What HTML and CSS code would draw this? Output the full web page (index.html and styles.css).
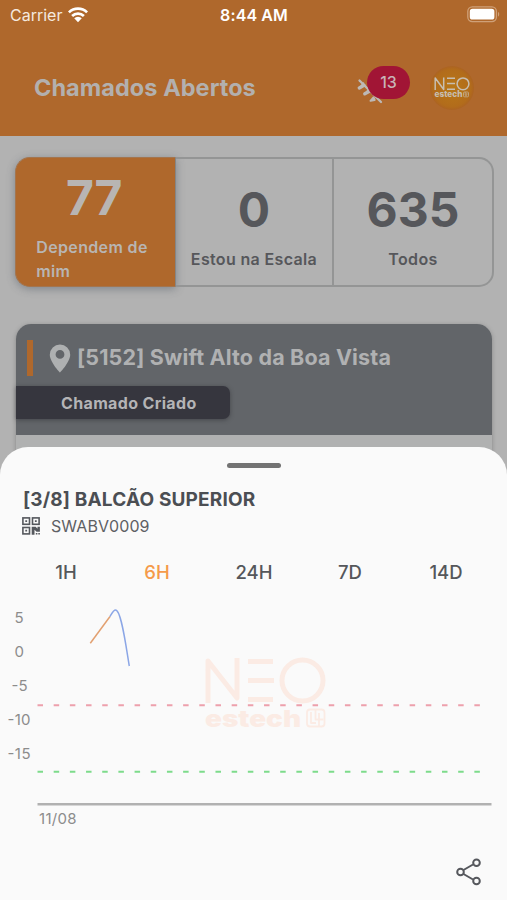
FILE: index.html
```html
<!DOCTYPE html>
<html lang="pt-BR">
<head>
<meta charset="utf-8">
<title>Chamados Abertos</title>
<link rel="stylesheet" href="styles.css">
</head>
<body>
<div class="screen">
  <header class="header">
    <div class="status">
      <div class="carrier"><span class="carrier-name">Carrier</span>
        <svg class="wifi" width="20" height="16" viewBox="0 0 20 16"><g fill="none" stroke="#fff" stroke-width="2.7"><path d="M.9 5.4a13 13 0 0 1 18.2 0"/><path d="M4.1 9a8.5 8.5 0 0 1 11.8 0"/></g><path d="M6.2 11.3a5.5 5.5 0 0 1 7.6 0L10 15.2z" fill="#fff"/></svg>
      </div>
      <span class="clock">8:44 AM</span>
      <svg class="battery" width="33" height="17" viewBox="0 0 33 17"><rect x=".8" y=".8" width="28.6" height="14.8" rx="4.5" fill="none" stroke="#cfa078" stroke-width="1.3"/><rect x="2.8" y="2.8" width="24.6" height="10.8" rx="2.7" fill="#fff"/><path d="M31 6c1.6.6 1.6 3.9 0 4.5z" fill="#cfa078"/></svg>
    </div>
    <div class="title-row">
      <h1 class="title">Chamados Abertos</h1>
      <div class="alerts">
        <svg class="alert-icon" width="28" height="28" viewBox="0 0 28 28"><g fill="none" stroke="#bdb9b6" stroke-linecap="round"><path d="M3.500 2.500L25 24" stroke-width="2.300"/><path d="M3.300 10l4.700-2.700M8.800 15.800l5-2.800" stroke-width="3.400"/><path d="M4 9.500L7.500 5M10 15l3-4.500" stroke-width="1.500"/><path d="M14.500 22.800l4.200-.8-1.200-2.500z" fill="#bdb9b6" stroke-width="2" stroke-linejoin="round"/></g></svg>
        <span class="badge">13</span>
      </div>
      <svg class="avatar" width="44" height="46" viewBox="0 0 44 46"><defs><radialGradient id="av"><stop offset="0" stop-color="#b87818"/><stop offset=".85" stop-color="#b26c1b"/><stop offset="1" stop-color="#ac6322"/></radialGradient></defs><circle cx="22" cy="23" r="22" fill="url(#av)"/><g fill="none" stroke="#c7beb1" stroke-width="1.5"><path stroke-linejoin="round" d="M5.200 25v-12l8.500 11.500v-12M17 13.200h8M17 18.500h8M17 24.300h8"/><circle cx="33" cy="18.800" r="5.900"/></g><g fill="none" stroke="#c7beb1" stroke-width=".9" opacity=".75"><rect x="33.500" y="27" width="5" height="4.800" rx="1"/><path d="M35.200 27v3.300h1.600V28"/></g><text class="avatar-sub" x="4.500" y="32" textLength="28" lengthAdjust="spacingAndGlyphs">estech</text></svg>
    </div>
  </header>

  <main class="content">
    <section class="stats">
      <div class="stat active"><span class="num">77</span><span class="label">Dependem de<br>mim</span></div>
      <div class="stat"><span class="num">0</span><span class="label">Estou na Escala</span></div>
      <div class="stat"><span class="num">635</span><span class="label">Todos</span></div>
    </section>
    <section class="ticket">
      <div class="ticket-head">
        <div class="ticket-title">
          <span class="bar"></span>
          <svg class="pin" width="22" height="29" viewBox="0 0 22 29"><path fill-rule="evenodd" fill="#aeb0b1" d="M11 .5A10.200 10.200 0 0 0 .8 10.700C.8 18 11 28.500 11 28.500S21.200 18 21.200 10.700A10.200 10.200 0 0 0 11 .5zM11 6a4.400 4.400 0 1 1 0 8.800A4.400 4.400 0 0 1 11 6z"/></svg>
          <h2 class="place">[5152] Swift Alto da Boa Vista</h2>
        </div>
        <div class="state">Chamado Criado</div>
      </div>
    </section>
  </main>

  <section class="sheet">
    <div class="handle"></div>
    <h3 class="device">[3/8] BALCÃO SUPERIOR</h3>
    <div class="code-row">
      <svg width="18" height="18" viewBox="0 0 18 18"><g fill="none" stroke="#55585d" stroke-width="1.600"><rect x=".9" y=".9" width="6.600" height="6.400"/><rect x="10.500" y=".9" width="6.600" height="6.400"/><rect x=".9" y="10.500" width="6.600" height="6.400"/></g><path fill="#55585d" d="M3.300 3.200h1.800v1.800H3.300zM12.900 3.200h1.800v1.800h-1.800zM3.300 12.800h1.800v1.800H3.300zM9.700 9.700h4l1.800 2V9.700h2.400v5h-3.400l-2-2v5H9.700zM13.800 16h1.600v1.600h-1.600zM16.300 16h1.600v1.600h-1.600z"/></svg>
      <span class="code">SWABV0009</span>
    </div>
    <nav class="tabs"><span>1H</span><span class="selected">6H</span><span>24H</span><span>7D</span><span>14D</span></nav>
    <svg class="chart" width="507" height="240" viewBox="0 595 507 240">
      <g class="watermark">
        <path d="M208 703v-42l29 37v-40M248 661.500h25M248 680.500h26M248 699.500h25"/>
        <circle cx="302.500" cy="680.500" r="20.500"/>
        <rect x="307" y="709.500" width="17.500" height="17" rx="3" class="mark"/>
        <path class="mark" d="M311 712v11h5M315.500 709.500v10h8M319 713v13"/>
        <text x="205" y="727" textLength="96" lengthAdjust="spacingAndGlyphs">estech</text>
      </g>
      <g class="axis">
        <text x="14.500" y="622.500">5</text><text x="14.500" y="656.500">0</text><text x="11.500" y="690.500">-5</text><text x="7.500" y="724.500" textLength="23">-10</text><text x="7.500" y="758.500" textLength="23">-15</text><text x="39" y="824" textLength="37.500">11/08</text>
      </g>
      <path d="M37.500 705.200H481" stroke="#eda0ac" class="limit"/>
      <path d="M37.500 771.700H481" stroke="#7ddb8b" class="limit"/>
      <path d="M37.500 804.200H491.500" stroke="#b1b1b1" stroke-width="2.600"/>
      <path d="M90.300 643.300L110 616.500" class="line" stroke="#e2a070"/>
      <path d="M110 616.500C112 613.300 113.500 610 115.500 610C121.500 610 126.500 650 129.300 666" class="line" stroke="#8ba6e6"/>
    </svg>
    <svg class="share" width="26" height="28" viewBox="0 0 26 28"><g fill="none" stroke="#55575c" stroke-width="2"><path d="M7.500 12l9.500-5.500M7.500 16l9.500 5.500"/><circle cx="4.500" cy="14" r="3.300"/><circle cx="20.500" cy="4.800" r="3.300"/><circle cx="20.500" cy="23" r="3.300"/></g></svg>
  </section>
</div>
</body>
</html>
```
FILE: styles.css
```css
* { box-sizing: border-box; }
body { margin: 0; font-family: Inter, "Liberation Sans", sans-serif; background: #b2b2b2; }
h1, h2, h3 { margin: 0; }
.screen { position: relative; width: 507px; height: 900px; overflow: hidden; background: #b2b2b2; }

.header { height: 136px; background: #af682c; }
.status { display: grid; grid-template-columns: 1fr auto 1fr; height: 30px; padding: 0 7px 0 10px; align-items: center; color: #fff; }
.carrier { display: flex; align-items: center; gap: 6px; }
.carrier-name { font-size: 16px; letter-spacing: 0; color: #f5e9df; }
.clock { font-size: 16px; font-weight: 600; letter-spacing: .1px; margin-right: 2px; }
.battery { justify-self: end; margin-top: -2px; }
.title-row { display: flex; align-items: center; height: 106px; padding: 10px 33px 0 34px; }
.title { flex: 1; font-size: 23.500px; line-height: 30px; font-weight: 650; letter-spacing: .05px; color: #b3b0ae; }
.alerts { display: flex; width: 54px; height: 44px; margin-right: 19px; position: relative; }
.alert-icon { margin: 12px 0 0 -1px; }
.badge { position: absolute; left: 10px; top: 0; width: 43px; height: 33px; border-radius: 17px; background: #a11535; color: #c8b3b7; font-size: 16px; line-height: 33px; text-align: center; font-weight: 500; }
.avatar-sub { font-size: 8.500px; font-weight: 800; fill: #c7beb1; }

.content { padding: 21px 14px 0 15px; }
.stats { display: grid; grid-template-columns: 161px 158px 160px; height: 130px; border-radius: 15px; }
.stat { display: flex; flex-direction: column; align-items: center; color: #56575b; border: 2px solid #949595; border-left: 0; padding-top: 21px; }
.stat:last-child { border-radius: 0 15px 15px 0; }
.stat.active { background: #af682c; color: #b8b5b3; border: 1px solid #a3754f; border-right-color: #858585; border-radius: 15px 0 0 15px; padding-top: 10px; box-shadow: 0 2px 8px rgba(70, 80, 90, .45); }
.num { font-size: 48px; line-height: 60px; font-weight: 700; }
.label { font-size: 16px; line-height: 24px; font-weight: 600; margin-top: 7px; letter-spacing: .35px; }
.active .num { margin-left: -3px; letter-spacing: -.5px; }
.active .label { margin: 7px 0 0 -7px; }

.ticket { margin: 37px 1px 0; height: 200px; border-radius: 15px; background: #b0b1b1; box-shadow: 0 1px 4px rgba(70, 70, 70, .4); }
.ticket-head { height: 111px; background: #626569; border-radius: 15px 15px 0 0; padding-top: 16px; }
.ticket-title { display: flex; align-items: center; height: 36px; padding-left: 11px; }
.bar { width: 6px; height: 36px; background: #af682c; }
.pin { margin: 0 6px 0 16px; }
.place { font-size: 21.500px; line-height: 30px; font-weight: 650; letter-spacing: .16px; color: #b0b1b2; padding-bottom: 2px; }
.state { width: 214px; height: 33px; margin-top: 10px; border-radius: 0 7px 7px 0; background: #36363e; color: #b4b4b6; font-size: 16px; line-height: 34px; font-weight: 650; letter-spacing: .35px; padding-left: 45px; box-shadow: 0 1px 4px rgba(40, 40, 45, .5); }

.sheet { position: absolute; left: 0; top: 447px; width: 507px; height: 453px; background: #fafafa; border-radius: 28px 28px 0 0; display: flex; flex-direction: column; }
.handle { width: 54px; height: 5px; margin: 16px 0 0 227px; border-radius: 3px; background: #737373; }
.device { margin: 19px 0 0 23px; font-size: 19px; line-height: 26px; font-weight: 650; letter-spacing: .16px; color: #4b4e53; }
.code-row { display: flex; align-items: center; gap: 11px; height: 22px; margin: 2px 0 0 22px; }
.code { font-size: 16px; letter-spacing: .1px; color: #5e6064; }
.tabs { display: grid; grid-template-columns: 92px 90px 104px 88px 104px; height: 30px; margin: 20px 0 0 20px; align-items: center; text-align: center; font-size: 18.500px; font-weight: 500; color: #55575b; }
.selected { color: #f59a4a; }
.chart { display: block; margin-top: 8px; flex: none; }
.axis text { font-size: 15px; fill: #8c8c8c; }
.limit { stroke-width: 2; stroke-dasharray: 5.500 10.680; }
.line { fill: none; stroke-width: 1.500; }
.watermark path, .watermark circle { fill: none; stroke: #fbebe4; stroke-width: 5; stroke-linejoin: round; }
.watermark text { font-size: 23px; font-weight: 900; fill: #fbebe4; }
.watermark .mark { fill: none; stroke: #fbebe4; stroke-width: 1.800; }
.share { margin: 23px 0 0 456px; flex: none; }
```
